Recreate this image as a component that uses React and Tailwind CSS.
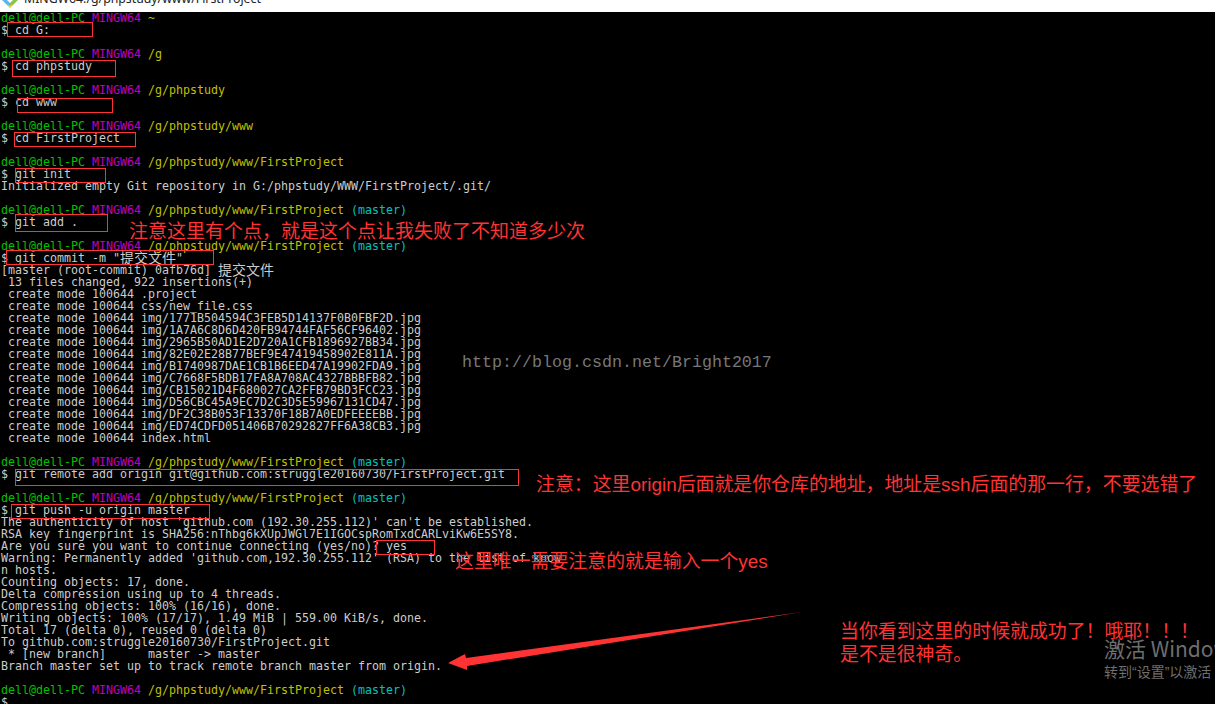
const mono = "font-['DejaVu_Sans_Mono','Liberation_Mono',monospace]";

function Prompt({ path, branch }) {
  return (
    <div className="h-3 whitespace-pre">
      <span className="text-[#00c000]">dell@dell-PC</span>{' '}
      <span className="text-[#c000c0]">MINGW64</span>{' '}
      <span className="text-[#c0c000]">{path}</span>
      {branch ? <span className="text-[#00c0c0]"> (master)</span> : null}
    </div>
  );
}

function Out({ children }) {
  return <div className="h-3 whitespace-pre">{children}</div>;
}

function Box({ className }) {
  return <div className={"absolute border border-[#ff3333] " + className} />;
}

const imgs = [
  '1771B504594C3FEB5D14137F0B0FBF2D',
  '1A7A6C8D6D420FB94744FAF56CF96402',
  '2965B50AD1E2D720A1CFB1896927BB34',
  '82E02E28B77BEF9E47419458902E811A',
  'B1740987DAE1CB1B6EED47A19902FDA9',
  'C7668F5BDB17FA8A708AC4327BBBFB82',
  'CB15021D4F680027CA2FFB79BD3FCC23',
  'D56CBC45A9EC7D2C3D5E59967131CD47',
  'DF2C38B053F13370F18B7A0EDFEEEEBB',
  'ED74CDFD051406B70292827FF6A38CB3',
];

const note = "absolute whitespace-nowrap text-[#ff3333] font-['Liberation_Sans','Noto_Sans_CJK_SC',sans-serif] font-normal leading-none";
const cjk = "inline-block align-top w-[56px] text-[14px] leading-[11px] font-['Noto_Sans_CJK_SC',sans-serif]";

export default function App() {
  return (
    <div className="relative w-[1215px] h-[704px] overflow-hidden bg-black flex flex-col">
      <div className="h-3 shrink-0 bg-white overflow-hidden flex items-end gap-[6px] pl-[2px]">
        <svg className="mb-[4px] shrink-0" width="16" height="8" viewBox="0 0 16 8">
          <path d="M0 0H8V4L8 8Z" fill="#5bb5f0" />
          <path d="M8 0H16L8 8Z" fill="#8bc34a" />
          <path d="M4 4L8 8L12 4L8 6Z" fill="#f6d55c" />
          <path d="M5 0H11L8 3Z" fill="#fff" />
        </svg>
        <span className="mb-[5px] text-[12.3px] leading-[16px] text-[#222] whitespace-nowrap font-['Noto_Sans',sans-serif]">
          MINGW64:/g/phpstudy/www/FirstProject
        </span>
      </div>

      <div className={mono + " flex-1 pl-px text-[11.63px] leading-3 text-[#cccccc]"}>
        <Prompt path="~" />
        <Out>$ cd G:</Out>
        <Out> </Out>
        <Prompt path="/g" />
        <Out>$ cd phpstudy</Out>
        <Out> </Out>
        <Prompt path="/g/phpstudy" />
        <Out>$ cd www</Out>
        <Out> </Out>
        <Prompt path="/g/phpstudy/www" />
        <Out>$ cd FirstProject</Out>
        <Out> </Out>
        <Prompt path="/g/phpstudy/www/FirstProject" />
        <Out>$ git init</Out>
        <Out>Initialized empty Git repository in G:/phpstudy/WWW/FirstProject/.git/</Out>
        <Out> </Out>
        <Prompt path="/g/phpstudy/www/FirstProject" branch />
        <Out>$ git add .</Out>
        <Out> </Out>
        <Prompt path="/g/phpstudy/www/FirstProject" branch />
        <Out>
          $ git commit -m "<span className={cjk}>提交文件</span>"
        </Out>
        <Out>
          [master (root-commit) 0afb76d] <span className={cjk}>提交文件</span>
        </Out>
        <Out> 13 files changed, 922 insertions(+)</Out>
        <Out> create mode 100644 .project</Out>
        <Out> create mode 100644 css/new_file.css</Out>
        {imgs.map((i) => (
          <Out key={i}> create mode 100644 img/{i}.jpg</Out>
        ))}
        <Out> create mode 100644 index.html</Out>
        <Out> </Out>
        <Prompt path="/g/phpstudy/www/FirstProject" branch />
        <Out>$ git remote add origin git@github.com:struggle20160730/FirstProject.git</Out>
        <Out> </Out>
        <Prompt path="/g/phpstudy/www/FirstProject" branch />
        <Out>$ git push -u origin master</Out>
        <Out>The authenticity of host 'github.com (192.30.255.112)' can't be established.</Out>
        <Out>RSA key fingerprint is SHA256:nThbg6kXUpJWGl7E1IGOCspRomTxdCARLviKw6E5SY8.</Out>
        <Out>Are you sure you want to continue connecting (yes/no)? yes</Out>
        <Out>Warning: Permanently added 'github.com,192.30.255.112' (RSA) to the list of know</Out>
        <Out>n hosts.</Out>
        <Out>Counting objects: 17, done.</Out>
        <Out>Delta compression using up to 4 threads.</Out>
        <Out>Compressing objects: 100% (16/16), done.</Out>
        <Out>Writing objects: 100% (17/17), 1.49 MiB | 559.00 KiB/s, done.</Out>
        <Out>Total 17 (delta 0), reused 0 (delta 0)</Out>
        <Out>To github.com:struggle20160730/FirstProject.git</Out>
        <Out> * [new branch]      master -&gt; master</Out>
        <Out>Branch master set up to track remote branch master from origin.</Out>
        <Out> </Out>
        <Prompt path="/g/phpstudy/www/FirstProject" branch />
        <Out>$</Out>
      </div>

      <Box className="left-[7px] top-[22px] w-[86px] h-[15px]" />
      <Box className="left-[12px] top-[60px] w-[104px] h-[17px]" />
      <Box className="left-[17px] top-[98px] w-[96px] h-[15px]" />
      <Box className="left-[14px] top-[132px] w-[122px] h-[15px]" />
      <Box className="left-[15px] top-[168px] w-[91px] h-[15px]" />
      <Box className="left-[15px] top-[214px] w-[93px] h-[18px]" />
      <Box className="left-[6px] top-[250px] w-[208px] h-[15px]" />
      <Box className="left-[15px] top-[469px] w-[504px] h-[17px]" />
      <Box className="left-[11px] top-[504px] w-[199px] h-[15px]" />
      <Box className="left-[376px] top-[540px] w-[59px] h-[15px]" />

      <div className={note + " left-[129px] top-[222px] text-[19px]"}>注意这里有个点，就是这个点让我失败了不知道多少次</div>
      <div className={note + " left-[536px] top-[476px] text-[18.9px]"}>注意：这里origin后面就是你仓库的地址，地址是ssh后面的那一行，不要选错了</div>
      <div className={note + " left-[455px] top-[553px] text-[18.9px]"}>这里唯一需要注意的就是输入一个yes</div>
      <div className={note + " left-[840px] top-[623px] text-[18.9px]"}>当你看到这里的时候就成功了！哦耶！！！</div>
      <div className={note + " left-[840px] top-[646px] text-[18.9px]"}>是不是很神奇。</div>

      <div className="absolute left-[462px] top-[353px] text-[16.67px] leading-5 whitespace-nowrap text-[#777] font-['Liberation_Mono',monospace]">
        http://blog.csdn.net/Bright2017
      </div>

      <div className="absolute left-[1104px] top-[636px] text-[21px] leading-6 whitespace-nowrap text-[#6e6e6e] font-['Noto_Sans_CJK_SC',sans-serif]">
        激活 Windows
      </div>
      <div className="absolute left-[1104px] top-[663px] text-[14px] leading-[18px] whitespace-nowrap text-[#6e6e6e] font-['Liberation_Sans','Noto_Sans_CJK_SC',sans-serif]">
        转到“设置”以激活 Windows。
      </div>

      <svg className="absolute left-0 top-0 pointer-events-none" width="1215" height="704" viewBox="0 0 1215 704">
        <polygon points="448,663 465,654 466,658 802,612 467,666 467,670" fill="#ff3333" />
      </svg>
    </div>
  );
}
